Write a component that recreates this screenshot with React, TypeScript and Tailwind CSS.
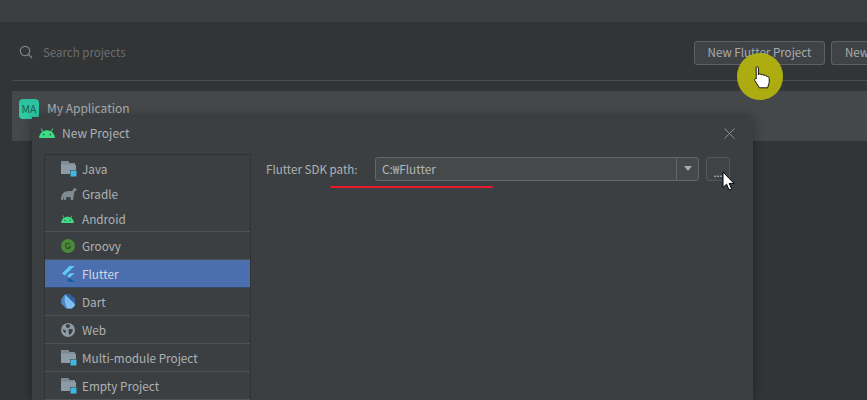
const FONT = "font-['Noto_Sans_CJK_KR','Noto_Sans',sans-serif]";

function AndroidIcon({ w = 16, h = 10 }: { w?: number; h?: number }) {
  return (
    <svg width={w} height={h} viewBox="0 0 16 10" className="block">
      <path d="M0 10 C0.5 5 4 2.2 8 2.2 C12 2.2 15.5 5 16 10 Z" fill="#3ddc84" />
      <path d="M3.6 3.6 L2.4 0.6 M12.4 3.6 L13.6 0.6" stroke="#3ddc84" strokeWidth="1" />
      <circle cx="4.8" cy="6.6" r="0.8" fill="#3c3f41" />
      <circle cx="11.2" cy="6.6" r="0.8" fill="#3c3f41" />
    </svg>
  );
}

function FolderIcon() {
  return (
    <svg width="16" height="16" viewBox="0 0 16 16" className="block">
      <path d="M0 0 H7 L8.5 2 H14 V4 H15 V9 H9 V13 H0 Z" fill="#8d9ba6" />
      <path d="M0 0 H7 L8.5 2 H14 V3.4 H0 Z" fill="#7c8a95" />
      <rect x="9.5" y="9.5" width="6" height="6" fill="#40b6e0" />
    </svg>
  );
}

function GradleIcon() {
  return (
    <svg width="16" height="14" viewBox="0 0 16 14" className="block">
      <path d="M0 13 C0 7 3 4 8 4 C10 4 11 4.5 12 3 C12.3 1.5 13.5 1 15 1.5 L15.8 3 C15.3 4.2 14.2 3.6 13.6 4.6 C13 7 12.5 9.5 12.2 13 H9.8 L9.4 10 H5.5 L4.8 13 H3 L2.6 10 L1.8 13 Z" fill="#7f8b91" />
    </svg>
  );
}

function GroovyIcon() {
  return (
    <svg width="14" height="14" viewBox="0 0 14 14" className="block">
      <circle cx="7" cy="7" r="7" fill="#4a8a3a" />
      <path d="M9 5.2 A2.6 2.6 0 1 0 9.4 8 H7.2" fill="none" stroke="#33552c" strokeWidth="1.3" />
    </svg>
  );
}

function FlutterIcon() {
  return (
    <svg width="14" height="16" viewBox="0 0 14 16" className="block">
      <path d="M8.6 0 H13.5 L3.6 9.6 L1 7.2 Z" fill="#5fc9f8" />
      <path d="M8.8 7.2 H13.5 L8.4 12 L6 9.8 Z" fill="#5fc9f8" />
      <path d="M6 14 L8.4 12 L13.5 16 H8.8 Z" fill="#0a5fa6" />
    </svg>
  );
}

function DartIcon() {
  return (
    <svg width="14" height="15" viewBox="0 0 14 15" className="block">
      <path d="M4 0.6 H9 L13.8 5 V11.5 L11 14.6 H5 L0.2 9.5 V4.8 Z" fill="#4a86c8" />
      <path d="M4 0.6 H9 L13.8 5 V10 Z" fill="#2e62a0" />
      <path d="M4 0.6 L13.8 10 V11.5 L11 14.6 H6 L3.6 7 Z" fill="#7fbdf0" />
    </svg>
  );
}

function WebIcon() {
  return (
    <svg width="14" height="14" viewBox="0 0 14 14" className="block">
      <circle cx="7" cy="7" r="7" fill="#8d9ba6" />
      <path d="M4.6 1.4 L8 1.2 L9.4 3 L7.4 5.2 L5.4 4.6 Z M7.8 6 L12 6.2 L11 9.6 L8.6 12.2 L7.6 9.4 Z M1.4 6.2 L4.4 7.2 L5.2 9.6 L3.4 9.8 Z" fill="#3c3f41" />
    </svg>
  );
}

function Row({ icon, label, border = false, selected = false, tall = false }: { icon: React.ReactNode; label: string; border?: boolean; selected?: boolean; tall?: boolean }) {
  return (
    <div
      className={`flex items-center pl-[16px] shrink-0 ${tall ? "h-[28px]" : border ? "h-[26px]" : "h-[25px]"} ${border ? "border-b border-[#505254]" : ""} ${selected ? "bg-[#4b6eaf] text-[#d5d8dd] !border-[#35496e]" : "text-[#aeb2b5]"}`}
    >
      <span className="w-[21px] flex justify-start items-center shrink-0">{icon}</span>
      <span className="text-[11.75px] leading-none">{label}</span>
    </div>
  );
}

export default function App() {
  return (
    <div className={`relative w-[867px] h-[400px] overflow-hidden bg-[#333435] ${FONT}`}>
      <div className="h-[22px] bg-[#3c3f41]" />
      <div className="h-[58px] flex items-center pl-[19px] pt-[3px]">
        <svg width="15" height="15" viewBox="0 0 15 15" className="shrink-0">
          <circle cx="6" cy="6" r="4.7" fill="none" stroke="#7f8285" strokeWidth="1.2" />
          <path d="M9.5 9.5 L13 13" stroke="#7f8285" strokeWidth="1.4" />
        </svg>
        <span className="ml-[9px] text-[11.5px] text-[#6d6f71]">Search projects</span>
        <div className="ml-auto flex gap-[6px]">
          <div className="w-[131px] h-[24px] rounded-[3px] border border-[#5e6163] bg-[#404345] text-[#a9acaf] text-[11.6px] flex items-center justify-center">New Flutter Project</div>
          <div className="w-[36px] h-[24px] rounded-l-[3px] border border-r-0 border-[#5e6163] bg-[#404345] text-[#a9acaf] text-[11.5px] flex items-center pl-[13px] whitespace-nowrap">New</div>
        </div>
      </div>
      <div className="ml-[12px] h-px bg-[#4a4c4e]" />
      <div className="ml-[12px] mt-[10px] h-[50px] bg-[#45484b] flex items-start pl-[7px] pt-[8px]">
        <div className="w-[20px] h-[20px] rounded-[4px] bg-gradient-to-b from-[#2bbf9f] to-[#2fcfa5] text-[#1d5f5a] text-[10.5px] flex items-center justify-center">MA</div>
        <span className="ml-[8px] text-[12px] leading-[18px] text-[#a9acaf]">My Application</span>
      </div>

      <div className="absolute left-[32px] top-[117px] w-[721px] h-[283px] bg-[#3c3f41] shadow-[0_0_10px_rgba(0,0,0,0.35)] flex flex-col">
        <div className="h-[32px] shrink-0 flex items-center pl-[7px] pr-[18px]">
          <AndroidIcon />
          <span className="ml-[7px] text-[12px] text-[#aeb2b5]">New Project</span>
          <svg width="11" height="11" viewBox="0 0 11 11" className="ml-auto">
            <path d="M0.5 0.5 L10.5 10.5 M10.5 0.5 L0.5 10.5" stroke="#8f9295" strokeWidth="1" />
          </svg>
        </div>
        <div className="flex flex-1 min-h-0 pl-[12px] pt-[5px]">
          <div className="w-[207px] h-[300px] shrink-0 border border-[#323232] flex flex-col">
            <div className="h-[1px] shrink-0" />
            <Row icon={<FolderIcon />} label="Java" />
            <Row icon={<GradleIcon />} label="Gradle" />
            <Row icon={<AndroidIcon w={13} h={8} />} label="Android" border />
            <Row icon={<GroovyIcon />} label="Groovy" border tall />
            <Row icon={<FlutterIcon />} label="Flutter" border selected tall />
            <Row icon={<DartIcon />} label="Dart" border tall />
            <Row icon={<WebIcon />} label="Web" border tall />
            <Row icon={<FolderIcon />} label="Multi-module Project" border tall />
            <Row icon={<FolderIcon />} label="Empty Project" border tall />
          </div>
          <div className="flex items-start pl-[15px] pt-[3px]">
            <span className="text-[11.6px] leading-[24px] text-[#aeb2b5] w-[109px]">Flutter SDK path:</span>
            <div className="w-[324px] h-[24px] rounded-[3px] border border-[#63676a] bg-[#45494a] flex items-center">
              <span className="pl-[6px] flex-1 text-[11.75px] text-[#b4b7ba]">C:₩Flutter</span>
              <div className="w-[22px] h-full border-l border-[#63676a] flex items-center justify-center">
                <svg width="10" height="6" viewBox="0 0 10 6"><path d="M1 0 H9 L5 5 Z" fill="#a9acaf" /></svg>
              </div>
            </div>
            <div className="ml-[7px] w-[24px] h-[24px] rounded-[3px] border border-[#55585a] bg-[#404345] text-[#c4d0dc] text-[11px] flex items-end justify-center leading-[16px]">...</div>
          </div>
        </div>
      </div>

      <div className="absolute left-[330px] top-[186px] w-[163px] h-[2px] bg-[#e8192c] rounded-full" />
      <div className="absolute left-[737px] top-[53px] w-[46px] h-[47px] rounded-full bg-[#b3b20f]/95" />
      <svg width="16" height="23" viewBox="0 0 16 23" className="absolute left-[754px] top-[66px]">
        <path d="M2.2 1.6 C2.2 0.4 4.4 0.4 4.4 1.6 V9 L4.6 8.4 C5.4 7.4 7 7.6 7.2 9 C8 8 9.6 8.2 9.8 9.6 C10.6 8.8 12.4 9 12.8 10.6 C13.2 10.2 15.2 10.6 15.2 12.4 V16.6 L13.6 21.8 H5.4 L0.8 14.6 C0 13 1.4 12.2 2.2 13 Z" fill="#fff" stroke="#000" strokeWidth="0.9" />
      </svg>
      <svg width="14" height="21" viewBox="0 0 14 21" className="absolute left-[722px] top-[171px]">
        <path d="M1 1 V16.5 L4.6 13.2 L7 19 L9.6 17.9 L7.2 12.4 H12 Z" fill="#fff" stroke="#000" strokeWidth="1" />
      </svg>
    </div>
  );
}
